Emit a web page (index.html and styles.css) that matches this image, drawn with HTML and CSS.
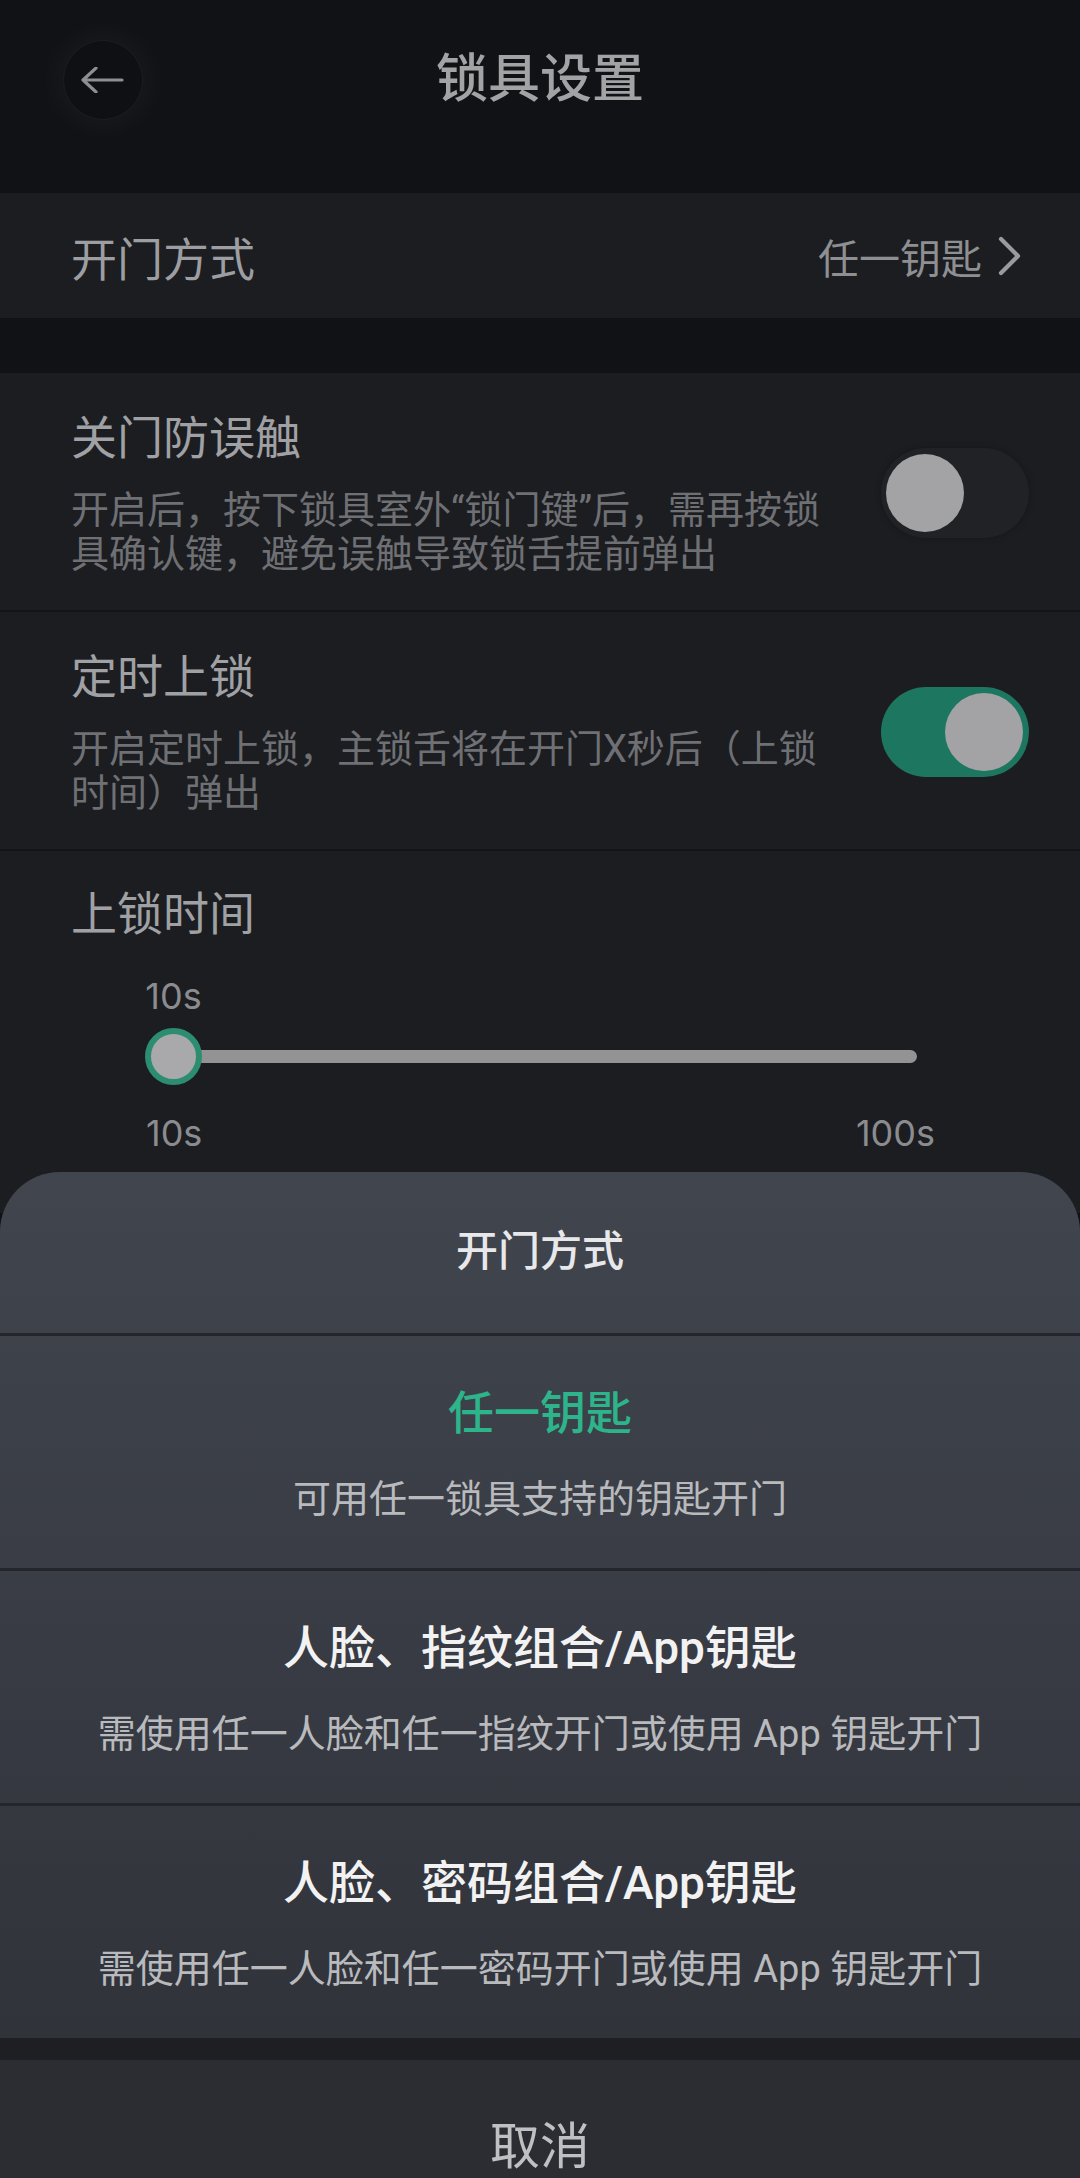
FILE: index.html
```html
<!DOCTYPE html>
<html lang="zh-CN">
<head>
<meta charset="utf-8">
<title>锁具设置</title>
<link rel="stylesheet" href="styles.css">
</head>
<body>
<div class="page">
  <header class="topbar">
    <div class="back">
      <svg width="44" height="26" viewBox="0 0 44 26"><path d="M42 13H3M16 1L3 13L16 25" fill="none" stroke="#8e8f93" stroke-width="3.2" stroke-linecap="round" stroke-linejoin="round"/></svg>
    </div>
    <h1 class="title">锁具设置</h1>
    <div></div>
  </header>

  <section class="card nav-row">
    <span class="nav-label">开门方式</span>
    <span class="nav-value">任一钥匙
      <svg class="chev" width="26" height="40" viewBox="0 0 26 40"><path d="M4 3L21 20L4 37" fill="none" stroke="#9b9b9e" stroke-width="4.2" stroke-linecap="round" stroke-linejoin="round"/></svg>
    </span>
  </section>

  <section class="card group">
    <div class="toggle-row">
      <div class="texts">
        <div class="row-title">关门防误触</div>
        <div class="row-desc">开启后，按下锁具室外“锁门键”后，需再按锁具确认键，避免误触导致锁舌提前弹出</div>
      </div>
      <div class="switch off"><div class="knob"></div></div>
    </div>
    <div class="toggle-row">
      <div class="texts">
        <div class="row-title">定时上锁</div>
        <div class="row-desc">开启定时上锁，主锁舌将在开门X秒后（上锁时间）弹出</div>
      </div>
      <div class="switch on"><div class="knob"></div></div>
    </div>
    <div class="slider-row">
      <div class="row-title">上锁时间</div>
      <div class="slider">
        <div class="current">10s</div>
        <div class="track-wrap">
          <div class="track"></div>
          <div class="thumb" style="left:0%"></div>
        </div>
        <div class="range"><span>10s</span><span>100s</span></div>
      </div>
    </div>
  </section>

  <div class="sheet">
    <div class="sheet-body">
      <div class="sheet-head">开门方式</div>
      <div class="option">
        <div class="opt-title selected">任一钥匙</div>
        <div class="opt-desc">可用任一锁具支持的钥匙开门</div>
      </div>
      <div class="option">
        <div class="opt-title">人脸、指纹组合/App钥匙</div>
        <div class="opt-desc">需使用任一人脸和任一指纹开门或使用 App 钥匙开门</div>
      </div>
      <div class="option">
        <div class="opt-title">人脸、密码组合/App钥匙</div>
        <div class="opt-desc">需使用任一人脸和任一密码开门或使用 App 钥匙开门</div>
      </div>
    </div>
    <div class="cancel">取消</div>
  </div>
</div>
</body>
</html>
```
FILE: styles.css
```css
* { box-sizing: border-box; margin: 0; padding: 0; }
html, body { background: #111215; }
body {
  width: 1080px;
  height: 2178px;
  overflow: hidden;
  font-family: Roboto, "Noto Sans CJK SC", sans-serif;
}
.page {
  position: relative;
  width: 1080px;
  height: 2178px;
  overflow: hidden;
  background: #111215;
}

/* header */
.topbar {
  height: 193px;
  display: grid;
  grid-template-columns: 1fr auto 1fr;
  align-items: start;
  padding-top: 40px;
}
.back {
  width: 80px;
  height: 80px;
  margin-left: 63px;
  border-radius: 50%;
  background: #0f1013;
  border: 1px solid rgba(255,255,255,0.05);
  box-shadow: 0 0 26px 10px rgba(255,255,255,0.03);
  display: flex;
  align-items: center;
  justify-content: center;
}
.back svg { margin-left: -2px; }
.title {
  font-size: 52px;
  line-height: 80px;
  font-weight: 500;
  color: #a3a3a6;
}

/* cards */
.card { background: #1c1d21; }
.nav-row {
  height: 125px;
  display: flex;
  align-items: center;
  justify-content: space-between;
  padding: 0 57px 0 71px;
}
.nav-label { font-size: 46px; color: #9d9ea1; }
.nav-value {
  display: flex;
  align-items: center;
  font-size: 41px;
  color: #8e8f92;
}
.chev { margin-left: 15px; }

.group { margin-top: 55px; }
.toggle-row {
  display: flex;
  align-items: center;
  gap: 40px;
  padding: 37px 51px 34px 71px;
  border-bottom: 2px solid #131417;
}
.texts { width: 770px; flex: 0 0 770px; }
.row-title {
  font-size: 46px;
  line-height: 56px;
  color: #a0a1a4;
}
.row-desc {
  margin-top: 22px;
  font-size: 38px;
  line-height: 44px;
  color: #6f7074;
}

.switch {
  width: 148px;
  height: 90px;
  border-radius: 45px;
  display: flex;
  align-items: center;
  padding: 0 6px;
  flex: 0 0 148px;
}
.switch.off {
  background: #212226;
  box-shadow: 0 0 6px rgba(0,0,0,0.25);
  padding-left: 5px;
}
.switch.on {
  background: #1d7660;
  justify-content: flex-end;
}
.knob {
  width: 78px;
  height: 78px;
  border-radius: 50%;
  background: #a3a3a5;
}

/* slider */
.slider-row { padding: 35px 0 60px 71px; }
.slider { width: 800px; margin-left: 74px; margin-top: 34px; }
.current {
  width: 57px;
  text-align: center;
  font-family: Inter, sans-serif;
  font-size: 36px;
  line-height: 40px;
  color: #8b8c8f;
}
.track-wrap {
  position: relative;
  height: 57px;
  margin-top: 12px;
  display: flex;
  align-items: center;
  padding: 0 28px;
}
.track {
  flex: 1;
  height: 13px;
  border-radius: 7px;
  background: #939393;
}
.thumb {
  position: absolute;
  top: 0;
  width: 57px;
  height: 57px;
  border-radius: 50%;
  background: #a9a9ab;
  border: 6px solid #2d8d70;
}
.range {
  margin-top: 28px;
  display: flex;
  justify-content: space-between;
  padding: 0 10px 0 1px;
  font-family: Inter, sans-serif;
  font-size: 36px;
  line-height: 40px;
  color: #8b8c8f;
}

/* bottom sheet */
.sheet {
  position: absolute;
  left: 0;
  right: 0;
  top: 1172px;
  border-radius: 60px 60px 0 0;
  overflow: hidden;
  background: #1d1f23;
}
.sheet-body {
  background: linear-gradient(#41454e, #30333a);
}
.sheet-head {
  height: 161px;
  padding-bottom: 10px;
  display: flex;
  align-items: center;
  justify-content: center;
  font-size: 42px;
  font-weight: 500;
  color: #e8e8ea;
}
.option {
  height: 235px;
  border-top: 3px solid #24262b;
  padding-top: 47px;
  text-align: center;
}
.opt-title {
  font-size: 46px;
  line-height: 60px;
  font-weight: 500;
  color: #f2f2f3;
}
.opt-title.selected { color: #2db48b; }
.opt-desc {
  margin-top: 32px;
  font-size: 38px;
  line-height: 48px;
  color: #b9babd;
}
.cancel {
  margin-top: 22px;
  height: 164px;
  background: #2b2d33;
  display: flex;
  align-items: center;
  justify-content: center;
  font-size: 50px;
  color: #bfc0c2;
}
```
